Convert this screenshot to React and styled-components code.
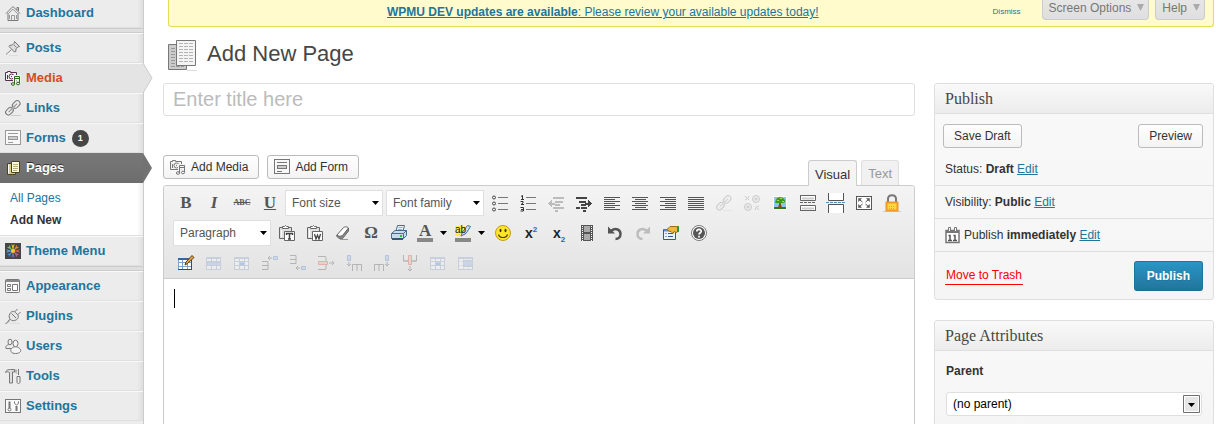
import { useState } from 'react';
import styled, { createGlobalStyle, css } from 'styled-components';

const palette = {
  link: '#21759b',
  text: '#333',
  line: '#dfdfdf',
  grey: '#777',
  hover: '#d54e21',
};

const GlobalStyle = createGlobalStyle`
  * {
    box-sizing: border-box;
  }
  body {
    margin: 0;
    background: #fff;
    color: ${palette.text};
    font: 12px/16px 'Liberation Sans', Arial, sans-serif;
    overflow: hidden;
  }
  button, input, select, textarea {
    font: inherit;
    color: inherit;
    margin: 0;
  }
  svg {
    display: block;
    flex: none;
    overflow: visible;
  }
`;

const Page = styled.div`
  display: flex;
  height: 100vh;
  overflow: hidden;
`;

/* ---------- side menu ---------- */

const SideMenu = styled.nav`
  flex: none;
  width: 144px;
  min-height: 100%;
  background: #ececec;
  border-right: 1px solid #ccc;
`;

const MenuList = styled.ul`
  list-style: none;
  margin: -2px 0 0;
  padding: 0;
`;

const MenuItem = styled.li`
  position: relative;
`;

const MenuLink = styled.a`
  display: flex;
  align-items: center;
  gap: 5px;
  height: 30px;
  padding-left: 5px;
  border-top: 1px solid #f9f9f9;
  border-bottom: 1px solid ${palette.line};
  background: linear-gradient(to left, #dedede, #ececec 6px);
  color: ${palette.link};
  font-size: 13px;
  font-weight: bold;
  text-decoration: none;
  ${({ $state }) =>
    $state === 'hover' &&
    css`
      background: #e4e4e4;
      color: ${palette.hover};
    `}
  ${({ $state }) =>
    $state === 'current' &&
    css`
      background: linear-gradient(#787878, #6d6d6d);
      border-color: #787878 transparent #6d6d6d;
      color: #fff;
      text-shadow: 0 -1px 0 #333;
    `}
`;

const MenuArrow = styled.svg`
  position: absolute;
  top: 0;
  left: 100%;
`;

const MenuSeparator = styled.li`
  height: 5px;
  border-top: 1px solid #ccc;
  border-bottom: 1px solid #ccc;
  background: #dfdfdf;
`;

const Badge = styled.span`
  margin-left: 1px;
  width: 17px;
  border-radius: 9px;
  background: #464646;
  color: #fff;
  font-size: 9px;
  line-height: 17px;
  text-align: center;
`;

const SubMenu = styled.ul`
  list-style: none;
  margin: 0;
  padding: 4px 0 4px 10px;
  border-bottom: 1px solid ${palette.line};
  background: linear-gradient(to left, #ededed, #fff 6px);
  line-height: 22px;
`;

const SubLink = styled.a`
  color: ${({ $current }) => ($current ? palette.text : palette.link)};
  font-weight: ${({ $current }) => ($current ? 'bold' : 'normal')};
  text-decoration: none;
`;

/* ---------- top of the content ---------- */

const Content = styled.div`
  flex: 1;
  min-width: 0;
  padding: 0 2px 0 19px;
`;

const Notice = styled.div`
  display: flex;
  align-items: flex-start;
  height: 27px;
  margin-left: 5px;
  padding: 0 8px 0 44px;
  border: 1px solid #e6db55;
  border-top: 0;
  border-radius: 0 0 3px 3px;
  background: #fffbcc;
`;

const NoticeLink = styled.a`
  flex: 1;
  padding-top: 4px;
  color: ${palette.link};
  text-align: center;
`;

const Dismiss = styled.a`
  padding-top: 4px;
  margin-right: 21px;
  color: ${palette.link};
  font-size: 8px;
  text-decoration: none;
`;

const ScreenTab = styled.button`
  display: flex;
  align-items: center;
  gap: 6px;
  height: 20px;
  margin-left: ${({ $spaced }) => ($spaced ? '6px' : 0)};
  padding: 0 4px 4px 6px;
  border: 1px solid #ccc;
  border-top: 0;
  border-radius: 0 0 4px 4px;
  background: linear-gradient(#e6e6e6, #dfdfdf);
  color: ${palette.grey};
`;

const Heading = styled.header`
  display: flex;
  align-items: center;
  gap: 10px;
  height: 56px;
  padding-left: 4px;
  h1 {
    margin: 0;
    padding-bottom: 2px;
    color: #464646;
    font-size: 22px;
    font-weight: normal;
    line-height: 28px;
  }
`;

const Columns = styled.div`
  display: flex;
  gap: 19px;
`;

const EditorColumn = styled.main`
  flex: 1;
  min-width: 0;
`;

const SideColumn = styled.aside`
  flex: none;
  width: 280px;
  display: flex;
  flex-direction: column;
  gap: 20px;
`;

const TitleInput = styled.input`
  display: block;
  width: 100%;
  height: 33px;
  padding: 0 9px;
  border: 1px solid ${palette.line};
  border-radius: 3px;
  font-size: 20px;
  outline: 0;
  &::placeholder {
    color: #bbb;
    opacity: 1;
  }
`;

const MediaBar = styled.div`
  display: flex;
  align-items: flex-end;
  gap: 8px;
  padding-top: 39px;
`;

const Button = styled.button`
  display: flex;
  align-items: center;
  justify-content: center;
  gap: 5px;
  height: 24px;
  padding: 0 10px;
  border: 1px solid #bbb;
  border-radius: 3px;
  background: linear-gradient(#fefefe, #f4f4f4);
  color: ${palette.text};
  white-space: nowrap;
`;

const MediaButton = styled(Button)`
  margin-bottom: 6px;
  padding: 0 10px 0 6px;
`;

const PrimaryButton = styled(Button)`
  height: 30px;
  padding: 0 12px;
  border-color: #21759b #21759b #1e6a8d;
  background: linear-gradient(#2a95c5, #21759b);
  color: #fff;
  font-weight: bold;
  text-shadow: 0 1px 0 rgba(0, 0, 0, 0.1);
`;

const EditorTabs = styled.div`
  display: flex;
  align-items: flex-end;
  gap: 4px;
  margin-left: auto;
  padding-right: 16px;
`;

const EditorTab = styled.button`
  position: relative;
  z-index: 1;
  height: ${({ $active }) => ($active ? '26px' : '25px')};
  margin-bottom: ${({ $active }) => ($active ? '-1px' : 0)};
  padding: 2px 6px 0;
  border: 1px solid ${({ $active }) => ($active ? '#ccc' : palette.line)};
  border-bottom: 0;
  border-radius: 3px 3px 0 0;
  background: ${({ $active }) => ($active ? '#f4f4f4' : '#f1f1f1')};
  color: ${({ $active }) => ($active ? palette.text : '#999')};
  font-size: 13px;
`;

/* ---------- editor ---------- */

const Editor = styled.section`
  border: 1px solid #ccc;
  border-radius: 3px 3px 0 0;
`;

const Toolbar = styled.div`
  padding: 2px 8px 0;
  border-bottom: 1px solid #ccc;
  border-radius: 3px 3px 0 0;
  background: linear-gradient(#f4f4f4, #e3e3e3);
`;

const ToolRow = styled.div`
  display: flex;
  align-items: center;
  height: 30px;
`;

const ToolButton = styled.button`
  display: flex;
  align-items: center;
  justify-content: center;
  gap: 7px;
  flex: none;
  width: ${({ $split }) => ($split ? '38px' : '28px')};
  height: 28px;
  padding: 0;
  border: 0;
  background: none;
  opacity: ${({ disabled }) => (disabled ? 0.3 : 1)};
`;

const Glyph = styled.span`
  color: #555;
  font-family: 'Liberation Serif', serif;
  font-size: ${({ $small }) => ($small ? '8px' : '17px')};
  font-weight: bold;
  font-style: ${({ $italic }) => ($italic ? 'italic' : 'normal')};
  line-height: 18px;
  text-decoration: ${({ $line }) => $line || 'none'};
`;

const Script = styled.span`
  color: #222;
  font-size: 14px;
  font-weight: bold;
  line-height: 16px;
  sup, sub {
    color: #2b62b5;
    font-size: 8px;
    line-height: 0;
  }
`;

const SelectBox = styled.span`
  display: grid;
  align-items: center;
  flex: none;
  width: 98px;
  margin: 0 2px 0 1px;
  > * {
    grid-area: 1 / 1;
  }
  > svg {
    justify-self: end;
    margin-right: 4px;
    pointer-events: none;
  }
`;

const ToolSelect = styled.select`
  appearance: none;
  width: 100%;
  height: 26px;
  padding: 0 16px 0 6px;
  border: 1px solid ${palette.line};
  border-radius: 0;
  background: #fff;
  color: #555;
`;

const Writing = styled.div`
  display: flex;
  padding: 10px;
`;

const Caret = styled.span`
  width: 1px;
  height: 19px;
  background: #000;
`;

const WritingArea = styled.textarea`
  flex: 1;
  height: 300px;
  padding: 0;
  border: 0;
  outline: 0;
  resize: none;
  font-size: 13px;
`;

/* ---------- side boxes ---------- */

const Box = styled.section`
  border: 1px solid ${palette.line};
  border-radius: 3px;
  background: linear-gradient(#f9f9f9, #f5f5f5);
`;

const BoxTitle = styled.h3`
  margin: 0;
  height: 30px;
  padding-left: 10px;
  border-bottom: 1px solid ${palette.line};
  border-radius: 3px 3px 0 0;
  background: linear-gradient(#f9f9f9, #ececec);
  color: #464646;
  font: 16px/30px 'Liberation Serif', serif;
`;

const BoxActions = styled.div`
  display: flex;
  align-items: center;
  justify-content: space-between;
  padding: ${({ $foot }) => ($foot ? '9px 10px 8px' : '10px 10px 5px 8px')};
`;

const BoxRow = styled.div`
  display: flex;
  align-items: center;
  gap: 4px;
  height: 33px;
  padding: 0 10px;
  border-bottom: 1px solid ${palette.line};
  a {
    color: ${palette.link};
  }
`;

const TrashLink = styled.a`
  padding: 0 1px 1px;
  border-bottom: 1px solid #f00;
  color: #f00;
  text-decoration: none;
`;

const BoxBody = styled.div`
  display: flex;
  flex-direction: column;
  gap: 13px;
  padding: 12px 11px;
  label {
    font-weight: bold;
  }
`;

const ParentBox = styled(SelectBox)`
  width: 100%;
  margin: 0;
  > svg {
    margin-right: 2px;
  }
`;

const ParentSelect = styled(ToolSelect)`
  height: 24px;
  border-radius: 3px;
  color: #000;
`;

/* ---------- drawings ---------- */

const Icon = ({ size = 16, children, ...rest }) => (
  <svg width={size} height={size} viewBox={`0 0 ${size} ${size}`} fill="none" stroke="#777" aria-hidden="true" {...rest}>
    {children}
  </svg>
);

const Triangle = ({ color = '#000', w = 7, h = 4 }) => (
  <svg width={w} height={h} viewBox="0 0 7 4" preserveAspectRatio="none" aria-hidden="true">
    <path d="M0 0h7L3.5 4z" fill={color} />
  </svg>
);

const HomeIcon = () => (
  <Icon>
    <path d="M1 8.5 8 1.500l7 7M3 8v7.500h10V8M12 5V2.500h1.500V6" />
    <path d="M3.500 8.500 8 4.200l4.500 4.300M6.500 15.500v-5h3v5M4.500 10v4M11.500 10v4" stroke="#999" />
  </Icon>
);

const PinIcon = () => (
  <Icon>
    <path d="M9.500 1.500 14.500 6.500 12.800 7 11 8.800 10.800 11.500 9.500 12 4 6.500 4.800 5.300 7.500 5 9.200 3.200z" fill="#ddd" />
    <path d="m6.500 9.500-5.500 5M9 5l2.500 2.500" stroke="#888" />
    <path d="M4 15.500h9" stroke="#ddd" />
  </Icon>
);

const CameraIcon = ({ color = '#777', note = color }) => (
  <Icon stroke={color}>
    <path d="M.5 2.500h2v-1h3v1h6v8H.5z" fill="#f2f2f2" />
    <circle cx="6.500" cy="6.500" r="2.500" />
    <path d="M2.500 5v4M6 6.500h1" />
    <path d="M9.500 14V6.500h5V13M9.500 9h5" stroke="#f2f2f2" strokeWidth="3" />
    <path d="M9.500 14V6.500h5V13M9.500 8.500h5" stroke={note} />
    <ellipse cx="8" cy="14" rx="1.600" ry="1.300" stroke={note} />
    <ellipse cx="13" cy="13.500" rx="1.600" ry="1.300" stroke={note} />
  </Icon>
);

const ChainIcon = () => (
  <Icon>
    <g transform="rotate(-45 8 8)">
      <rect x="-1" y="5" width="8.500" height="5.500" rx="2.700" fill="#eee" />
      <rect x="8.500" y="5" width="8.500" height="5.500" rx="2.700" fill="#eee" />
      <path d="M2 7.800h3M11 7.800h3" stroke="#888" />
      <path d="M5 7.800h6" strokeWidth="2" stroke="#aaa" />
    </g>
    <path d="M6 15.500h10" stroke="#ccc" />
  </Icon>
);

const FormIcon = ({ color = '#999' }) => (
  <Icon stroke={color}>
    <rect x=".5" y=".5" width="15" height="14" fill="#f8f8f8" />
    <path d="M3 3.500h10" />
    <rect x="3.500" y="6.500" width="9" height="3" fill="#ccc" />
    <path d="M3 12.500h5" />
  </Icon>
);

const PagesIcon = () => (
  <Icon stroke="#4b4420">
    <path d="M2.500 3.500h8v11h-8z" fill="#d9cd8e" />
    <path d="M3.500 4.500v9" stroke="#fff" />
    <path d="M6.500 1.500h8v11h-8z" fill="#fffbd8" />
    <path d="M8 4.500h5M8 6.500h5M8 8.500h5M8 10.500h4" stroke="#b8ad76" />
  </Icon>
);

const rays = ['#f5d020', '#f58f20', '#f0603c', '#d05ab0', '#8a68d8', '#4c8be0', '#46b4d8', '#7bd04b'];

const StarburstIcon = () => (
  <Icon stroke="none">
    <rect width="16" height="16" fill="#464646" />
    {rays.map((ray, i) => (
      <path key={ray} d="M8 7V4M8 4.500 6.800 1.500M8 4.500l1.200-3" stroke={ray} transform={`rotate(${i * 45} 8 8)`} />
    ))}
    <circle cx="8" cy="8" r="2" fill="#f5c83a" />
  </Icon>
);

const AppearanceIcon = () => (
  <Icon>
    <rect x=".5" y="1.500" width="14" height="13" rx="1" fill="#f8f8f8" />
    <path d="M1 3h13" stroke="#888" strokeWidth="2" />
    <path d="M2.500 6.500h3v2h-3zM2.500 10.500h3v2h-3z" />
    <path d="M7.500 6.500h5v6h-5z" fill="#fff" />
  </Icon>
);

const PlugIcon = () => (
  <Icon>
    <path d="M5 5.500c2-3 4-2.500 5.500-1l2 2c1.500 2 1 4-1.500 5.500-2 1.200-4 1-5.500-.5S3.500 8 5 5.500z" fill="#e6e6e6" />
    <path d="m9.500 4 3-3M12.500 7l3-3M6.500 5.500l4.500 4.500M5 11.500c-3 1-1 3-4.500 4" />
    <path d="m5 12.500-3.500 3" stroke="#999" />
    <path d="M5 15.500h10" stroke="#ddd" />
  </Icon>
);

const UsersIcon = () => (
  <Icon>
    <ellipse cx="5" cy="4" rx="2" ry="2.800" fill="#eee" />
    <path d="M1 10.500C0 7.500 3 6.500 5 6.500" fill="#eee" />
    <path d="M1 10.500h5" />
    <ellipse cx="10.500" cy="5.500" rx="2.500" ry="3.300" fill="#f5f5f5" />
    <path d="M6 13.500c-1-3 2-4.700 4.500-4.700s6 2 5 4.700c-1.500 2.700-8.500 2.700-9.500 0z" fill="#f5f5f5" />
  </Icon>
);

const ToolsIcon = () => (
  <Icon>
    <path d="M.5 4.500c1-3 3-3 5-3h4v2.500H7.500v11h-3V4.500C3 3.500 2 3.500.5 4.500z" fill="#ddd" />
    <path d="M13.500 1v6M12 8.500h3V14c0 2-3 2-3 0z" fill="#eee" />
    <path d="M11 1.500v3l1 1" />
  </Icon>
);

const SettingsIcon = () => (
  <Icon>
    <rect x=".5" y="1.500" width="15" height="13" fill="#fafafa" />
    <path d="M4.500 3.500v7M11.500 8v5" strokeWidth="2" />
    <circle cx="4.500" cy="11.500" r="1.500" />
    <path d="M9.500 3.500v2l2 1.500 2-1.500v-2" />
  </Icon>
);

const PageStackIcon = () => (
  <svg width="30" height="32" viewBox="0 0 30 32" fill="none" aria-hidden="true">
    <path d="M1.500 5.500h18v25h-18z" fill="#ccc" stroke="#777" />
    <path d="M4 9.500h5M4 12.500h5M4 15.500h5M4 18.500h5M4 21.500h5M4 24.500h5M4 27.500h13" stroke="#999" strokeDasharray="4 1" />
    <path d="M9.500 1.500h19v25h-19z" fill="#f4f4f4" stroke="#777" />
    <path d="M12 4.500h14M12 7.500h14M12 10.500h14M12 13.500h14M12 16.500h14M12 19.500h14M12 22.500h14" stroke="#b4b4b4" strokeDasharray="4 1" />
    <path d="M20 31.500h10" stroke="#ddd" />
  </svg>
);

const CalendarIcon = () => (
  <svg width="15" height="16" viewBox="0 0 15 16" fill="none" stroke="#777" aria-hidden="true">
    <path d="M1 3.500h13v12H1z" fill="#fff" strokeWidth="1.500" />
    <path d="M1 5h13" strokeWidth="2" />
    <path d="M3.500.5h2v4h-2zM9.500.5h2v4h-2z" fill="#fff" />
    <path d="M3.500 8.500H5V13M3 13.500h4M8.500 8.500H10V13M8 13.500h4" stroke="#555" strokeWidth="1.500" />
  </svg>
);

const LinesIcon = ({ align = 'full' }) => (
  <Icon stroke="#555" shapeRendering="crispEdges">
    {[2, 4, 6, 8, 10, 12, 14].map((y, i) => {
      const short = align !== 'full' && i % 2 === 1 ? 5 : 0;
      const start = align === 'right' ? short : align === 'center' ? Math.round(short / 2) : 0;
      return <path key={y} d={`M${start} ${y + 0.5}h${16 - short}`} />;
    })}
  </Icon>
);

const BulletIcon = () => (
  <Icon>
    <path d="M6 2.500h10M6 8.500h10M6 14.500h10" />
    <circle cx="2" cy="2.500" r="1.500" stroke="#444" />
    <circle cx="2" cy="8.500" r="1.500" stroke="#444" />
    <circle cx="2" cy="14.500" r="1.500" stroke="#444" />
  </Icon>
);

const NumberIcon = () => (
  <Icon>
    <path d="M6 2.500h10M6 8.500h10M6 14.500h10" />
    <path d="M1 1.500 2.500.5V4M1 4.500h3M.5 6.500h2.500V8L1 9.500h3M.5 12.500h3v3.500h-3M1 14.500h2" stroke="#333" />
  </Icon>
);

const IndentIcon = ({ out }) => (
  <Icon stroke="#444" shapeRendering="crispEdges">
    <path d={out ? 'M5 3h11M7 7h8M7 10h5M5 13h11M7 16h3' : 'M0 3h11M3 7h7M5 10h5M0 13h4M5 13h6M7 16h3'} strokeWidth="2" />
    <path d={out ? 'M0 8.500l4-4v3h3v2H4v3z' : 'M16 8.500l-4-4v3H9v2h3v3z'} fill="#444" stroke="none" />
  </Icon>
);

const UnlinkIcon = () => (
  <Icon>
    <circle cx="12" cy="4" r="3.500" fill="#ddd" />
    <circle cx="12" cy="4" r="1" />
    <circle cx="4" cy="12" r="3.500" fill="#ddd" />
    <circle cx="4" cy="12" r="1" />
    <path d="m1 1 4 4M5 1 4 3M1 5l2-1M11 11l4 4M11 15l1-2M15 11l-2 1" />
  </Icon>
);

const TreeIcon = () => (
  <svg width="14" height="14" viewBox="0 0 14 14" aria-hidden="true">
    <path d="M0 0h14v14H0z" fill="#fff" />
    <path d="M1 1h12v10H1z" fill="#8cc4f2" />
    <path d="M1 11h12v2H1z" fill="#2f7a1c" />
    <path d="M6 6h2v3l1 2H5l1-2z" fill="#8a4b1e" />
    <path d="M2 6.500 3 4l1-2 3-1 3 1 2 2v2l-2 1H8l-1 1-1-1H3z" fill="#3c9a1e" />
    <path d="M4 4h2v1H4zM7 2h2v1H7zM9 5h2v1H9z" fill="#a5dc5a" />
  </svg>
);

const MoreIcon = () => (
  <Icon stroke="#666">
    <path d="M.5 0v5.500h15V0M.5.500h15M.5 16v-5.500h15V16M.5 15.500h15" fill="#fff" />
    <path d="M2 3.500h12M2 13.500h12" stroke="#ccc" strokeWidth="2" />
    <path d="M0 7.500h16" strokeDasharray="3 1" />
  </Icon>
);

const PageBreakIcon = () => (
  <svg width="20" height="20" viewBox="0 0 20 20" fill="none" stroke="#555" aria-hidden="true">
    <path d="M2.500 0v7.500h15V0M2.500 20v-8.500h15V20" fill="#fff" />
    <path d="M0 9.500h20" stroke="#4f90c4" strokeDasharray="3 1" />
  </svg>
);

const FullscreenIcon = () => (
  <Icon stroke="#555">
    <rect x=".5" y="1.500" width="15" height="13" fill="#fff" />
    <path d="M2.500 6.500v-3h3zM10.500 3.500h3v3zM13.500 9.500v3h-3zM5.500 12.500h-3v-3z" fill="#555" strokeWidth=".5" />
    <path d="m4 5 2.500 2M12 5 9.500 7M12 11 9.500 9M4 11l2.500-2" />
  </Icon>
);

const LockIcon = () => (
  <svg width="18" height="18" viewBox="0 0 18 18" fill="none" aria-hidden="true">
    <path d="M0 17.500h18" stroke="#ccc" />
    <path d="M5 9V5c0-5 8-5 8 0v4" stroke="#777" strokeWidth="2" />
    <path d="M3.500 8.500h11v8h-11z" fill="#ffd93b" stroke="#ef9a28" strokeWidth="2" />
    <path d="M6 12.500h6M6 14.500h6" stroke="#e8a52a" strokeDasharray="1 1" />
  </svg>
);

const PasteIcon = ({ letter }) => (
  <Icon stroke="#666">
    <path d="M.5 2.500h12v11H.5z" fill="#e0e0e0" />
    <path d="M3.500 3.500v-2h2l1-1 1 1h2v2z" fill="#fff" />
    <path d="M2.500 5v7" stroke="#fff" />
    <path d="M5.500 6.500h10v9h-10z" fill="#fff" />
    {letter === 'T' ? (
      <path d="M7.500 10V8.500h6V10M10.500 9v5M9 14h3" stroke="#444" strokeWidth="1.500" />
    ) : (
      <path d="m7.500 9 1.500 5 1.500-4 1.500 4 1.500-5" stroke="#444" strokeWidth="1.300" />
    )}
  </Icon>
);

const EraserIcon = () => (
  <Icon stroke="#666">
    <path d="m1.500 10.500 7-8c1-1 5-1 5 1l-6 8c-1 1-5 1-6-1z" fill="#fff" />
    <path d="M2 10c1 1.500 4 1.500 5.500.5l6-7.500v3l-6 7.500c-1.500 1-4 0-5.500-2z" fill="#888" />
    <path d="M5 14.500h8" stroke="#999" />
  </Icon>
);

const PrinterIcon = () => (
  <Icon stroke="#4a6b8a">
    <path d="m5 6 1.500-5.500h7L12 6z" fill="#eaf4fc" />
    <path d="M7.500 2.500h4M7 4.500h4" stroke="#8bb2d4" />
    <path d="M.5 8.500 4 5.500h11.500v5l-3 3H.5z" fill="#c6dbec" />
    <path d="M.5 8.500h12l3-3M12.500 8.500v5" />
    <path d="M1 13h11v2H1z" fill="#385670" stroke="none" />
    <path d="M9 10h2v2H9z" fill="#25c425" stroke="none" />
  </Icon>
);

const ColorIcon = ({ mark }) => (
  <svg width="16" height="18" viewBox="0 0 16 18" fill="none" aria-hidden="true">
    {mark && <path d="M0 2h10v10H0z" fill="#ffef54" />}
    {mark ? (
      <>
        <path d="m6 12 1.500-4 5-6.500 3 1-4.500 7z" fill="#cfe0f2" stroke="#4f6d94" />
        <text x="0" y="9" fontSize="10" fontFamily="Liberation Sans, sans-serif" fill="#111">ab</text>
      </>
    ) : (
      <text x="2" y="12" fontSize="17" fontWeight="bold" fontFamily="Liberation Serif, serif" fill="#555">A</text>
    )}
    <path d="M0 14h16v4H0z" fill="#888" />
  </svg>
);

const SmileIcon = () => (
  <svg width="18" height="18" viewBox="0 0 18 18" fill="none" aria-hidden="true">
    <circle cx="9" cy="9" r="7.500" fill="#fbe62c" stroke="#c9971a" />
    <ellipse cx="6.500" cy="6.500" rx="1" ry="1.800" fill="#3c3000" />
    <ellipse cx="11.500" cy="6.500" rx="1" ry="1.800" fill="#3c3000" />
    <path d="M4.500 10.500c1 4 8 4 9 0" stroke="#5a4300" strokeWidth="1.200" />
  </svg>
);

const FilmIcon = () => (
  <svg width="12" height="16" viewBox="0 0 12 16" fill="none" aria-hidden="true">
    <path d="M0 0h12v16H0z" fill="#555" />
    <path d="M3 1h6v6H3zM3 9h6v6H3z" fill="#aaa" />
    <path d="M1.500 1v15M10.500 1v15" stroke="#fff" strokeDasharray="1 1" />
  </svg>
);

const UndoIcon = ({ redo }) => (
  <Icon stroke="#555">
    <g transform={redo ? 'matrix(-1 0 0 1 16 0)' : undefined}>
      <path d="M4 6c5-4 9.500-1 9.500 3 0 3-2 5-5 5" strokeWidth="2.500" />
      <path d="M1 1.500v7h7z" fill="#555" stroke="none" />
    </g>
  </Icon>
);

const PropertiesIcon = () => (
  <Icon stroke="#36598c">
    <path d="M.5 4.500h12v10H.5z" fill="#eaf2fb" />
    <path d="M1 5.500h11" stroke="#6a93c8" strokeWidth="2" />
    <path d="M2.500 8.500h1M5 8.500h5M2.500 11.500h1M5 11.500h5" />
    <path d="M4 4.500 7 1.500h6l2 1v4l-2 1-2-1-1 2-2-2-2-.5z" fill="#eebb3c" stroke="#9c6b14" />
    <path d="M15 1v6" stroke="#2f9444" strokeWidth="2" />
  </Icon>
);

const HelpIcon = () => (
  <Icon>
    <circle cx="8" cy="8" r="7.500" fill="#fff" />
    <circle cx="8" cy="8" r="6" fill="#555" stroke="none" />
    <path d="M5.800 6.500C6 3.500 10.500 4 10.200 6.500 10 8 8 8 8 9.500M8 10.700v1.800" stroke="#fff" strokeWidth="1.700" />
  </Icon>
);

const TableIcon = ({ fill = 'row' }) => (
  <Icon stroke="#7f9cc4" shapeRendering="crispEdges">
    <path d="M.5 2.500h14v12H.5z" fill="#fff" />
    <path d="M0 3h15" strokeWidth="2" />
    {fill === 'row' && <path d="M1 7h13v3H1z" fill="#8db1e8" />}
    {fill === 'cell' && <path d="M5 7h5v3H5z" fill="#4d81d0" />}
    {fill === 'merge' && <path d="M5 5h9v6H5z" fill="#8db1e8" />}
    <path d="M.5 6.500h14M.5 10.500h14M5.500 3v12M10.500 3v12" strokeOpacity={fill === 'merge' ? 0.5 : 1} />
  </Icon>
);

const InsertTableIcon = () => (
  <Icon stroke="#7d9fc8">
    <path d="M.5 3.500h13v11H.5z" fill="#fff" />
    <path d="M.5 7.500h13M.5 11.500h13M4.500 4v11M9.500 4v11" />
    <path d="M0 4h14" stroke="#3b6596" strokeWidth="2" />
    <path d="M0 14.500h14M13.500 4v11" stroke="#1e4e8c" />
    <path d="m7 10 1-3 6-6.500 2 2-6.500 6z" fill="#e8a33c" stroke="#5b3c12" />
  </Icon>
);

/* one shape for the six row and column tools: lines, a cell and an arrow */
const CellIcon = ({ lines, cell, arrow, red }) => (
  <Icon stroke="#444">
    <path d={lines} />
    <path d={cell} fill={red ? '#ff9b8a' : '#9cc0f4'} stroke={red ? '#d03a22' : '#3f74c0'} />
    <path d={arrow} />
  </Icon>
);

const rowBefore = <CellIcon lines="M0 6.500h6v8H0M0 10.500h6" cell="M11.500 1.500h4v3h-4z" arrow="M6 3h4M8 1 6 3l2 2" />;
const rowAfter = <CellIcon lines="M0 .5h6v8H0M0 4.500h6" cell="M11.500 11.500h4v3h-4z" arrow="M6 13h4M8 11l-2 2 2 2" />;
const rowDelete = <CellIcon red lines="M0 1.500h8M0 14.500h8M8 2v12" cell="M.5 6.500h9v3h-9z" arrow="M11 8h5M14 6l2 2-2 2" />;
const colBefore = <CellIcon lines="M6.500 16V9.500h9V16M11 9.500V16" cell="M1.500.5h3v5h-3z" arrow="M3 11V7M1 9l2 2 2-2" />;
const colAfter = <CellIcon lines="M.5 16V9.500h9V16M5 9.500V16" cell="M11.500.5h3v5h-3z" arrow="M13 11V7M11 9l2 2 2-2" />;
const colDelete = <CellIcon red lines="M1.500 0v6h13V0M1.500 6h13" cell="M6.500.5h3v9h-3z" arrow="M8 11v5M6 14l2 2 2-2" />;

/* ---------- data ---------- */

const menu = [
  { name: 'Dashboard', icon: <HomeIcon /> },
  { separator: true, name: 'first' },
  { name: 'Posts', icon: <PinIcon /> },
  { name: 'Media', icon: <CameraIcon color="#5f2a50" note="#2e6a1e" />, state: 'hover' },
  { name: 'Links', icon: <ChainIcon /> },
  { name: 'Forms', icon: <FormIcon />, count: 1 },
  { name: 'Pages', icon: <PagesIcon />, state: 'current', children: ['All Pages', 'Add New'] },
  { name: 'Theme Menu', icon: <StarburstIcon /> },
  { separator: true, name: 'second' },
  { name: 'Appearance', icon: <AppearanceIcon /> },
  { name: 'Plugins', icon: <PlugIcon /> },
  { name: 'Users', icon: <UsersIcon /> },
  { name: 'Tools', icon: <ToolsIcon /> },
  { name: 'Settings', icon: <SettingsIcon /> },
];

const toolRows = [
  [
    { name: 'Bold', icon: <Glyph>B</Glyph> },
    { name: 'Italic', icon: <Glyph $italic>I</Glyph> },
    { name: 'Strikethrough', icon: <Glyph $small $line="line-through">ABC</Glyph> },
    { name: 'Underline', icon: <Glyph $line="underline">U</Glyph> },
    { name: 'Font size', select: true },
    { name: 'Font family', select: true },
    { name: 'Bulleted list', icon: <BulletIcon /> },
    { name: 'Numbered list', icon: <NumberIcon /> },
    { name: 'Outdent', icon: <IndentIcon out />, disabled: true },
    { name: 'Indent', icon: <IndentIcon /> },
    { name: 'Align left', icon: <LinesIcon align="left" /> },
    { name: 'Align center', icon: <LinesIcon align="center" /> },
    { name: 'Align right', icon: <LinesIcon align="right" /> },
    { name: 'Justify', icon: <LinesIcon /> },
    { name: 'Link', icon: <ChainIcon />, disabled: true },
    { name: 'Unlink', icon: <UnlinkIcon />, disabled: true },
    { name: 'Image', icon: <TreeIcon /> },
    { name: 'More tag', icon: <MoreIcon /> },
    { name: 'Page break', icon: <PageBreakIcon /> },
    { name: 'Fullscreen', icon: <FullscreenIcon /> },
    { name: 'Protect', icon: <LockIcon /> },
  ],
  [
    { name: 'Paragraph', select: true },
    { name: 'Paste as text', icon: <PasteIcon letter="T" /> },
    { name: 'Paste from Word', icon: <PasteIcon letter="W" /> },
    { name: 'Remove formatting', icon: <EraserIcon /> },
    { name: 'Special character', icon: <Glyph>Ω</Glyph> },
    { name: 'Print', icon: <PrinterIcon /> },
    { name: 'Text color', icon: <ColorIcon />, split: true },
    { name: 'Highlight color', icon: <ColorIcon mark />, split: true },
    { name: 'Emoticons', icon: <SmileIcon /> },
    { name: 'Superscript', icon: <Script>x<sup>2</sup></Script> },
    { name: 'Subscript', icon: <Script>x<sub>2</sub></Script> },
    { name: 'Embed media', icon: <FilmIcon /> },
    { name: 'Undo', icon: <UndoIcon /> },
    { name: 'Redo', icon: <UndoIcon redo />, disabled: true },
    { name: 'Edit style', icon: <PropertiesIcon /> },
    { name: 'Help', icon: <HelpIcon /> },
  ],
  [
    { name: 'Insert table', icon: <InsertTableIcon /> },
    { name: 'Row properties', icon: <TableIcon />, disabled: true },
    { name: 'Cell properties', icon: <TableIcon fill="cell" />, disabled: true },
    { name: 'Insert row before', icon: rowBefore, disabled: true },
    { name: 'Insert row after', icon: rowAfter, disabled: true },
    { name: 'Delete row', icon: rowDelete, disabled: true },
    { name: 'Insert column before', icon: colBefore, disabled: true },
    { name: 'Insert column after', icon: colAfter, disabled: true },
    { name: 'Delete column', icon: colDelete, disabled: true },
    { name: 'Split cells', icon: <TableIcon fill="cell" />, disabled: true },
    { name: 'Merge cells', icon: <TableIcon fill="merge" />, disabled: true },
  ],
];

const Tool = ({ name, icon, select, split, disabled }) => {
  if (select) {
    return (
      <SelectBox>
        <ToolSelect aria-label={name}>
          <option>{name}</option>
        </ToolSelect>
        <Triangle />
      </SelectBox>
    );
  }
  return (
    <ToolButton type="button" title={name} aria-label={name} $split={split} disabled={disabled}>
      {icon}
      {split && <Triangle />}
    </ToolButton>
  );
};

const Menu = () => (
  <SideMenu>
    <MenuList>
      {menu.map(({ name, icon, separator, state, count, children }) =>
        separator ? (
          <MenuSeparator key={name} />
        ) : (
          <MenuItem key={name}>
            <MenuLink href="#" $state={state}>
              {icon}
              {name}
              {count && <Badge>{count}</Badge>}
            </MenuLink>
            {state && (
              <MenuArrow width="10" height="30" viewBox="0 0 10 30" aria-hidden="true">
                <path
                  d="M0 0 9 15 0 30"
                  fill={state === 'current' ? '#727272' : '#e4e4e4'}
                  stroke={state === 'current' ? 'none' : '#ccc'}
                />
              </MenuArrow>
            )}
            {children && (
              <SubMenu>
                {children.map(child => (
                  <li key={child}>
                    <SubLink href="#" $current={child === 'Add New'}>
                      {child}
                    </SubLink>
                  </li>
                ))}
              </SubMenu>
            )}
          </MenuItem>
        ),
      )}
    </MenuList>
  </SideMenu>
);

const PublishBox = () => (
  <Box>
    <BoxTitle>Publish</BoxTitle>
    <BoxActions>
      <Button type="button">Save Draft</Button>
      <Button type="button">Preview</Button>
    </BoxActions>
    <BoxRow>
      <span>
        Status: <b>Draft</b> <a href="#">Edit</a>
      </span>
    </BoxRow>
    <BoxRow>
      <span>
        Visibility: <b>Public</b> <a href="#">Edit</a>
      </span>
    </BoxRow>
    <BoxRow>
      <CalendarIcon />
      <span>
        Publish <b>immediately</b> <a href="#">Edit</a>
      </span>
    </BoxRow>
    <BoxActions $foot>
      <TrashLink href="#">Move to Trash</TrashLink>
      <PrimaryButton type="submit">Publish</PrimaryButton>
    </BoxActions>
  </Box>
);

const AttributesBox = () => (
  <Box>
    <BoxTitle>Page Attributes</BoxTitle>
    <BoxBody>
      <label htmlFor="parent">Parent</label>
      <ParentBox>
        <ParentSelect id="parent">
          <option>(no parent)</option>
        </ParentSelect>
        <svg width="17" height="18" viewBox="0 0 17 18" aria-hidden="true">
          <path d="M.5.500h16v17H.5z" fill="#e6e6e6" stroke="#707070" />
          <path d="M1.500 1.500h14v15h-14z" fill="none" stroke="#fff" />
          <path d="M5 8h7l-3.500 4z" fill="#000" />
        </svg>
      </ParentBox>
    </BoxBody>
  </Box>
);

const App = () => {
  const [title, setTitle] = useState('');
  const [body, setBody] = useState('');
  const [mode, setMode] = useState('Visual');

  return (
    <Page>
      <GlobalStyle />
      <Menu />
      <Content>
        <Notice>
          <NoticeLink href="#">
            <b>WPMU DEV updates are available</b>: Please review your available updates today!
          </NoticeLink>
          <Dismiss href="#">Dismiss</Dismiss>
          <ScreenTab type="button">
            Screen Options <Triangle color="#aaa" w={7} h={7} />
          </ScreenTab>
          <ScreenTab type="button" $spaced>
            Help <Triangle color="#aaa" w={7} h={7} />
          </ScreenTab>
        </Notice>
        <Heading>
          <PageStackIcon />
          <h1>Add New Page</h1>
        </Heading>
        <Columns>
          <EditorColumn>
            <TitleInput
              aria-label="Title"
              placeholder="Enter title here"
              value={title}
              onChange={e => setTitle(e.target.value)}
            />
            <MediaBar>
              <MediaButton type="button">
                <CameraIcon /> Add Media
              </MediaButton>
              <MediaButton type="button">
                <FormIcon color="#777" /> Add Form
              </MediaButton>
              <EditorTabs>
                {['Visual', 'Text'].map(name => (
                  <EditorTab key={name} type="button" $active={mode === name} onClick={() => setMode(name)}>
                    {name}
                  </EditorTab>
                ))}
              </EditorTabs>
            </MediaBar>
            <Editor>
              <Toolbar>
                {toolRows.map((row, i) => (
                  <ToolRow key={i}>
                    {row.map(tool => (
                      <Tool key={tool.name} {...tool} />
                    ))}
                  </ToolRow>
                ))}
              </Toolbar>
              <Writing>
                <Caret />
                <WritingArea aria-label="Page content" value={body} onChange={e => setBody(e.target.value)} />
              </Writing>
            </Editor>
          </EditorColumn>
          <SideColumn>
            <PublishBox />
            <AttributesBox />
          </SideColumn>
        </Columns>
      </Content>
    </Page>
  );
};

export default App;
